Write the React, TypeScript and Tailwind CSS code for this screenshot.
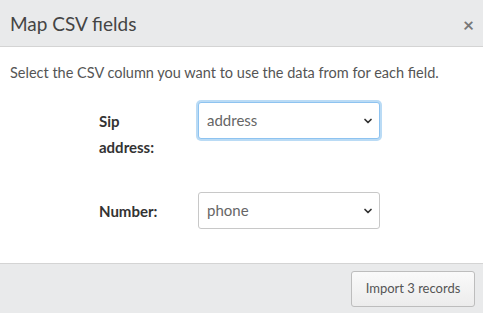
import { ChevronDown } from "lucide-react"

const fields = [
  { label: "Sip address:", value: "address", focused: true },
  { label: "Number:", value: "phone", focused: false },
]

function FieldRow({ label, value, focused }: { label: string; value: string; focused: boolean }) {
  return (
    <div className="flex items-start">
      <label className="w-[72px] flex-none pt-[6px] text-[15px] font-bold leading-[26px] text-[#333]">{label}</label>
      <div
        className={
          "ml-[27px] flex h-[37px] w-[182px] items-center justify-between rounded-[3px] border bg-white pl-[8px] pr-[5px] " +
          (focused ? "border-[#8ec3f0] shadow-[0_0_0_2px_rgba(102,175,233,0.45)]" : "border-[#c8c8c8]")
        }
      >
        <span className="text-[15px] text-[#666]">{value}</span>
        <ChevronDown className="h-[12px] w-[12px] text-[#333]" strokeWidth={3.5} />
      </div>
    </div>
  )
}

export default function App() {
  return (
    <div className="flex h-[313px] w-[483px] flex-col bg-white font-['Lato','Liberation_Sans',sans-serif]">
      {/* Header */}
      <div className="flex h-[47px] flex-none items-center justify-between border-b border-[#d4d4d4] bg-[#e9eaeb] pl-[10px] pr-[9px]">
        <h2 className="text-[19px] leading-none text-[#444]">Map CSV fields</h2>
        <span className="pt-[2px] text-[19px] font-bold leading-none text-[#777]">×</span>
      </div>

      {/* Body */}
      <div className="flex-1 pl-[10px] pt-[16px]">
        <p className="text-[14.5px] leading-[20px] text-[#555]">
          Select the CSV column you want to use the data from for each field.
        </p>
        <div className="mt-[19px] flex flex-col gap-[32px] pl-[89px]">
          {fields.map((f) => (
            <FieldRow key={f.label} {...f} />
          ))}
        </div>
      </div>

      {/* Footer */}
      <div className="flex h-[50px] flex-none items-start justify-end border-t border-[#d4d4d4] bg-[#e9eaeb] pr-[8px] pt-[7px]">
        <button
          type="button"
          className="h-[36px] w-[124px] rounded-[3px] border border-[#bdbdbd] bg-gradient-to-b from-[#fafafa] to-[#ececec] text-[13px] text-[#555]"
        >
          Import 3 records
        </button>
      </div>
    </div>
  )
}
